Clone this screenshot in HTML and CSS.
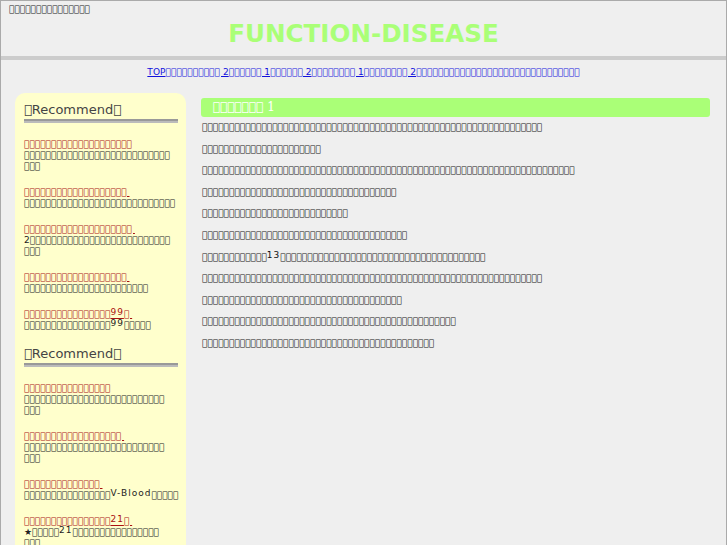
FILE: index.html
```html
<!DOCTYPE html>
<html lang="ja">
<head>
<meta charset="utf-8">
<title>FUNCTION-DISEASE</title>
<link rel="stylesheet" href="styles.css">
</head>
<body>
<div class="page">
  <div class="header">
    <p class="tagline">&#xE000;&#xE000;&#xE000;&#xE000;&#xE000;&#xE000;&#xE000;&#xE000;&#xE000;&#xE000;&#xE000;&#xE000;&#xE000;&#xE000;&#xE000;</p>
    <div class="title">FUNCTION-DISEASE</div>
  </div>
  <div class="nav"><a href="#">TOP</a><a href="#">&#xE000;&#xE000;&#xE000;&#xE000;&#xE000;&#xE000;&#xE000;&#xE000;&#xE000;&#xE000; 2</a><a href="#">&#xE000;&#xE000;&#xE000;&#xE000;&#xE000;&#xE000; 1</a><a href="#">&#xE000;&#xE000;&#xE000;&#xE000;&#xE000;&#xE000; 2</a><a href="#">&#xE000;&#xE000;&#xE000;&#xE000;&#xE000;&#xE000;&#xE000;&#xE000; 1</a><a href="#">&#xE000;&#xE000;&#xE000;&#xE000;&#xE000;&#xE000;&#xE000;&#xE000; 2</a><a href="#">&#xE000;&#xE000;&#xE000;&#xE000;&#xE000;&#xE000;&#xE000;&#xE000;&#xE000;&#xE000;&#xE000;&#xE000;&#xE000;&#xE000;&#xE000;&#xE000;&#xE000;&#xE000;&#xE000;&#xE000;&#xE000;&#xE000;&#xE000;&#xE000;&#xE000;&#xE000;&#xE000;&#xE000;&#xE000;&#xE000;</a></div>
  <div class="cols">
    <div class="side">
      <h2>&#xE000;Recommend&#xE000;</h2>
      <div class="rule"></div>
      <div class="item"><a href="#">&#xE000;&#xE000;&#xE000;&#xE000;&#xE000;&#xE000;&#xE000;&#xE000;&#xE000;&#xE000;&#xE000;&#xE000;&#xE000;&#xE000;&#xE000;&#xE000;&#xE000;&#xE000;&#xE000;&#xE000;</a><div class="desc">&#xE000;&#xE000;&#xE000;&#xE000;&#xE000;&#xE000;&#xE000;&#xE000;&#xE000;&#xE000;&#xE000;&#xE000;&#xE000;&#xE000;&#xE000;&#xE000;&#xE000;&#xE000;&#xE000;&#xE000;&#xE000;&#xE000;&#xE000;&#xE000;&#xE000;&#xE000;&#xE000;<br>&#xE000;&#xE000;&#xE000;</div></div>
      <div class="item"><a href="#">&#xE000;&#xE000;&#xE000;&#xE000;&#xE000;&#xE000;&#xE000;&#xE000;&#xE000;&#xE000;&#xE000;&#xE000;&#xE000;&#xE000;&#xE000;&#xE000;&#xE000;&#xE000;&#xE000;&nbsp;</a><div class="desc">&#xE000;&#xE000;&#xE000;&#xE000;&#xE000;&#xE000;&#xE000;&#xE000;&#xE000;&#xE000;&#xE000;&#xE000;&#xE000;&#xE000;&#xE000;&#xE000;&#xE000;&#xE000;&#xE000;&#xE000;&#xE000;&#xE000;&#xE000;&#xE000;&#xE000;&#xE000;&#xE000;&#xE000;</div></div>
      <div class="item"><a href="#">&#xE000;&#xE000;&#xE000;&#xE000;&#xE000;&#xE000;&#xE000;&#xE000;&#xE000;&#xE000;&#xE000;&#xE000;&#xE000;&#xE000;&#xE000;&#xE000;&#xE000;&#xE000;&#xE000;&#xE000;&nbsp;</a><div class="desc">2&#xE000;&#xE000;&#xE000;&#xE000;&#xE000;&#xE000;&#xE000;&#xE000;&#xE000;&#xE000;&#xE000;&#xE000;&#xE000;&#xE000;&#xE000;&#xE000;&#xE000;&#xE000;&#xE000;&#xE000;&#xE000;&#xE000;&#xE000;&#xE000;&#xE000;&#xE000;<br>&#xE000;&#xE000;&#xE000;</div></div>
      <div class="item"><a href="#">&#xE000;&#xE000;&#xE000;&#xE000;&#xE000;&#xE000;&#xE000;&#xE000;&#xE000;&#xE000;&#xE000;&#xE000;&#xE000;&#xE000;&#xE000;&#xE000;&#xE000;&#xE000;&#xE000;&nbsp;</a><div class="desc">&#xE000;&#xE000;&#xE000;&#xE000;&#xE000;&#xE000;&#xE000;&#xE000;&#xE000;&#xE000;&#xE000;&#xE000;&#xE000;&#xE000;&#xE000;&#xE000;&#xE000;&#xE000;&#xE000;&#xE000;&#xE000;&#xE000;&#xE000;</div></div>
      <div class="item"><a href="#">&#xE000;&#xE000;&#xE000;&#xE000;&#xE000;&#xE000;&#xE000;&#xE000;&#xE000;&#xE000;&#xE000;&#xE000;&#xE000;&#xE000;&#xE000;&#xE000;<span class="n">99</span>&#xE000;&nbsp;</a><div class="desc">&#xE000;&#xE000;&#xE000;&#xE000;&#xE000;&#xE000;&#xE000;&#xE000;&#xE000;&#xE000;&#xE000;&#xE000;&#xE000;&#xE000;&#xE000;&#xE000;<span class="n">99</span>&#xE000;&#xE000;&#xE000;&#xE000;&#xE000;</div></div>
      <h2>&#xE000;Recommend&#xE000;</h2>
      <div class="rule"></div>
      <div class="item"><a href="#">&#xE000;&#xE000;&#xE000;&#xE000;&#xE000;&#xE000;&#xE000;&#xE000;&#xE000;&#xE000;&#xE000;&#xE000;&#xE000;&#xE000;&#xE000;&#xE000;</a><div class="desc">&#xE000;&#xE000;&#xE000;&#xE000;&#xE000;&#xE000;&#xE000;&#xE000;&#xE000;&#xE000;&#xE000;&#xE000;&#xE000;&#xE000;&#xE000;&#xE000;&#xE000;&#xE000;&#xE000;&#xE000;&#xE000;&#xE000;&#xE000;&#xE000;&#xE000;&#xE000;<br>&#xE000;&#xE000;&#xE000;</div></div>
      <div class="item"><a href="#">&#xE000;&#xE000;&#xE000;&#xE000;&#xE000;&#xE000;&#xE000;&#xE000;&#xE000;&#xE000;&#xE000;&#xE000;&#xE000;&#xE000;&#xE000;&#xE000;&#xE000;&#xE000;&nbsp;</a><div class="desc">&#xE000;&#xE000;&#xE000;&#xE000;&#xE000;&#xE000;&#xE000;&#xE000;&#xE000;&#xE000;&#xE000;&#xE000;&#xE000;&#xE000;&#xE000;&#xE000;&#xE000;&#xE000;&#xE000;&#xE000;&#xE000;&#xE000;&#xE000;&#xE000;&#xE000;&#xE000;<br>&#xE000;&#xE000;&#xE000;</div></div>
      <div class="item"><a href="#">&#xE000;&#xE000;&#xE000;&#xE000;&#xE000;&#xE000;&#xE000;&#xE000;&#xE000;&#xE000;&#xE000;&#xE000;&#xE000;&#xE000;&nbsp;</a><div class="desc">&#xE000;&#xE000;&#xE000;&#xE000;&#xE000;&#xE000;&#xE000;&#xE000;&#xE000;&#xE000;&#xE000;&#xE000;&#xE000;&#xE000;&#xE000;&#xE000;<span class="n">V-Blood</span>&#xE000;&#xE000;&#xE000;&#xE000;&#xE000;</div></div>
      <div class="item"><a href="#">&#xE000;&#xE000;&#xE000;&#xE000;&#xE000;&#xE000;&#xE000;&#xE000;&#xE000;&#xE000;&#xE000;&#xE000;&#xE000;&#xE000;&#xE000;&#xE000;<span class="n">21</span>&#xE000;&nbsp;</a><div class="desc">★&#xE000;&#xE000;&#xE000;&#xE000;&#xE000;<span class="n">21</span>&#xE000;&#xE000;&#xE000;&#xE000;&#xE000;&#xE000;&#xE000;&#xE000;&#xE000;&#xE000;&#xE000;&#xE000;&#xE000;&#xE000;&#xE000;&#xE000;<br>&#xE000;&#xE000;&#xE000;</div></div>
    </div>
    <div class="main">
      <h1>&#xE000;&#xE000;&#xE000;&#xE000;&#xE000;&#xE000;&#xE000; 1</h1>
      <p>&#xE000;&#xE000;&#xE000;&#xE000;&#xE000;&#xE000;&#xE000;&#xE000;&#xE000;&#xE000;&#xE000;&#xE000;&#xE000;&#xE000;&#xE000;&#xE000;&#xE000;&#xE000;&#xE000;&#xE000;&#xE000;&#xE000;&#xE000;&#xE000;&#xE000;&#xE000;&#xE000;&#xE000;&#xE000;&#xE000;&#xE000;&#xE000;&#xE000;&#xE000;&#xE000;&#xE000;&#xE000;&#xE000;&#xE000;&#xE000;&#xE000;&#xE000;&#xE000;&#xE000;&#xE000;&#xE000;&#xE000;&#xE000;&#xE000;&#xE000;&#xE000;&#xE000;&#xE000;&#xE000;&#xE000;&#xE000;&#xE000;&#xE000;&#xE000;&#xE000;&#xE000;&#xE000;&#xE000;</p>
      <p>&#xE000;&#xE000;&#xE000;&#xE000;&#xE000;&#xE000;&#xE000;&#xE000;&#xE000;&#xE000;&#xE000;&#xE000;&#xE000;&#xE000;&#xE000;&#xE000;&#xE000;&#xE000;&#xE000;&#xE000;&#xE000;&#xE000;</p>
      <p>&#xE000;&#xE000;&#xE000;&#xE000;&#xE000;&#xE000;&#xE000;&#xE000;&#xE000;&#xE000;&#xE000;&#xE000;&#xE000;&#xE000;&#xE000;&#xE000;&#xE000;&#xE000;&#xE000;&#xE000;&#xE000;&#xE000;&#xE000;&#xE000;&#xE000;&#xE000;&#xE000;&#xE000;&#xE000;&#xE000;&#xE000;&#xE000;&#xE000;&#xE000;&#xE000;&#xE000;&#xE000;&#xE000;&#xE000;&#xE000;&#xE000;&#xE000;&#xE000;&#xE000;&#xE000;&#xE000;&#xE000;&#xE000;&#xE000;&#xE000;&#xE000;&#xE000;&#xE000;&#xE000;&#xE000;&#xE000;&#xE000;&#xE000;&#xE000;&#xE000;&#xE000;&#xE000;&#xE000;&#xE000;&#xE000;&#xE000;&#xE000;&#xE000;&#xE000;</p>
      <p>&#xE000;&#xE000;&#xE000;&#xE000;&#xE000;&#xE000;&#xE000;&#xE000;&#xE000;&#xE000;&#xE000;&#xE000;&#xE000;&#xE000;&#xE000;&#xE000;&#xE000;&#xE000;&#xE000;&#xE000;&#xE000;&#xE000;&#xE000;&#xE000;&#xE000;&#xE000;&#xE000;&#xE000;&#xE000;&#xE000;&#xE000;&#xE000;&#xE000;&#xE000;&#xE000;&#xE000;</p>
      <p>&#xE000;&#xE000;&#xE000;&#xE000;&#xE000;&#xE000;&#xE000;&#xE000;&#xE000;&#xE000;&#xE000;&#xE000;&#xE000;&#xE000;&#xE000;&#xE000;&#xE000;&#xE000;&#xE000;&#xE000;&#xE000;&#xE000;&#xE000;&#xE000;&#xE000;&#xE000;&#xE000;</p>
      <p>&#xE000;&#xE000;&#xE000;&#xE000;&#xE000;&#xE000;&#xE000;&#xE000;&#xE000;&#xE000;&#xE000;&#xE000;&#xE000;&#xE000;&#xE000;&#xE000;&#xE000;&#xE000;&#xE000;&#xE000;&#xE000;&#xE000;&#xE000;&#xE000;&#xE000;&#xE000;&#xE000;&#xE000;&#xE000;&#xE000;&#xE000;&#xE000;&#xE000;&#xE000;&#xE000;&#xE000;&#xE000;&#xE000;</p>
      <p>&#xE000;&#xE000;&#xE000;&#xE000;&#xE000;&#xE000;&#xE000;&#xE000;&#xE000;&#xE000;&#xE000;&#xE000;<span class="n">13</span>&#xE000;&#xE000;&#xE000;&#xE000;&#xE000;&#xE000;&#xE000;&#xE000;&#xE000;&#xE000;&#xE000;&#xE000;&#xE000;&#xE000;&#xE000;&#xE000;&#xE000;&#xE000;&#xE000;&#xE000;&#xE000;&#xE000;&#xE000;&#xE000;&#xE000;&#xE000;&#xE000;&#xE000;&#xE000;&#xE000;&#xE000;&#xE000;&#xE000;&#xE000;&#xE000;&#xE000;&#xE000;&#xE000;</p>
      <p>&#xE000;&#xE000;&#xE000;&#xE000;&#xE000;&#xE000;&#xE000;&#xE000;&#xE000;&#xE000;&#xE000;&#xE000;&#xE000;&#xE000;&#xE000;&#xE000;&#xE000;&#xE000;&#xE000;&#xE000;&#xE000;&#xE000;&#xE000;&#xE000;&#xE000;&#xE000;&#xE000;&#xE000;&#xE000;&#xE000;&#xE000;&#xE000;&#xE000;&#xE000;&#xE000;&#xE000;&#xE000;&#xE000;&#xE000;&#xE000;&#xE000;&#xE000;&#xE000;&#xE000;&#xE000;&#xE000;&#xE000;&#xE000;&#xE000;&#xE000;&#xE000;&#xE000;&#xE000;&#xE000;&#xE000;&#xE000;&#xE000;&#xE000;&#xE000;&#xE000;&#xE000;&#xE000;&#xE000;</p>
      <p>&#xE000;&#xE000;&#xE000;&#xE000;&#xE000;&#xE000;&#xE000;&#xE000;&#xE000;&#xE000;&#xE000;&#xE000;&#xE000;&#xE000;&#xE000;&#xE000;&#xE000;&#xE000;&#xE000;&#xE000;&#xE000;&#xE000;&#xE000;&#xE000;&#xE000;&#xE000;&#xE000;&#xE000;&#xE000;&#xE000;&#xE000;&#xE000;&#xE000;&#xE000;&#xE000;&#xE000;&#xE000;</p>
      <p>&#xE000;&#xE000;&#xE000;&#xE000;&#xE000;&#xE000;&#xE000;&#xE000;&#xE000;&#xE000;&#xE000;&#xE000;&#xE000;&#xE000;&#xE000;&#xE000;&#xE000;&#xE000;&#xE000;&#xE000;&#xE000;&#xE000;&#xE000;&#xE000;&#xE000;&#xE000;&#xE000;&#xE000;&#xE000;&#xE000;&#xE000;&#xE000;&#xE000;&#xE000;&#xE000;&#xE000;&#xE000;&#xE000;&#xE000;&#xE000;&#xE000;&#xE000;&#xE000;&#xE000;&#xE000;&#xE000;&#xE000;</p>
      <p>&#xE000;&#xE000;&#xE000;&#xE000;&#xE000;&#xE000;&#xE000;&#xE000;&#xE000;&#xE000;&#xE000;&#xE000;&#xE000;&#xE000;&#xE000;&#xE000;&#xE000;&#xE000;&#xE000;&#xE000;&#xE000;&#xE000;&#xE000;&#xE000;&#xE000;&#xE000;&#xE000;&#xE000;&#xE000;&#xE000;&#xE000;&#xE000;&#xE000;&#xE000;&#xE000;&#xE000;&#xE000;&#xE000;&#xE000;&#xE000;&#xE000;&#xE000;&#xE000;</p>
    </div>
  </div>
</div>
</body>
</html>
```

FILE: styles.css
```css
* { box-sizing: border-box; }

body {
  margin: 0;
  font-family: "DejaVu Sans", sans-serif;
  background: #efefef;
}

.page {
  border: 1px solid #aaa;
  border-bottom: none;
  background: #efefef;
  min-height: 580px;
}

.header {
  height: 59px;
  border-bottom: 4px solid #ccc;
}

.tagline {
  margin: 0;
  padding: 3px 0 0 8px;
  font-size: 9px;
  line-height: 10px;
  color: #222;
}

.title {
  margin-top: 5px;
  text-align: center;
  font-size: 24.6px;
  line-height: 29px;
  font-weight: bold;
  color: #aaff77;
}

.nav {
  padding-top: 7px;
  text-align: center;
  font-size: 9px;
  line-height: 11px;
  white-space: nowrap;
  letter-spacing: 0.05px;
}

.nav a {
  color: #1111dd;
}

.cols {
  display: flex;
  align-items: flex-start;
  gap: 15px;
  margin-top: 15px;
  padding: 0 16px 0 14px;
}

.side {
  flex: none;
  width: 171px;
  min-height: 470px;
  padding: 9px 8px 20px 9px;
  background: #ffffcc;
  border-radius: 10px 10px 0 0;
}

.side h2 {
  margin: 0;
  font-size: 13px;
  line-height: 16px;
  font-weight: normal;
  color: #444;
}

.rule {
  margin: 1px 0 16px;
  border-top: 2px solid #999;
  border-bottom: 2px solid #bbb;
}

.item {
  margin-bottom: 15px;
  font-size: 9px;
  line-height: 11px;
}

.item a {
  display: block;
  color: #aa1111;
  white-space: nowrap;
}

.desc {
  color: #222;
  white-space: nowrap;
}

.n {
  font-size: 9px;
  line-height: 0;
  vertical-align: 2px;
  letter-spacing: 1px;
}

.main {
  flex: 1;
  min-width: 0;
  margin-top: 5px;
}

.main h1 {
  margin: 0;
  height: 19px;
  padding-left: 12px;
  background: #aaff77;
  border-radius: 3px;
  color: #fff;
  font-family: "DejaVu Serif", serif;
  font-size: 12px;
  line-height: 19px;
  font-weight: normal;
}

.main p {
  margin: 0;
  padding-left: 1px;
  font-size: 9px;
  line-height: 21.6px;
  color: #111;
  white-space: nowrap;
}
```
